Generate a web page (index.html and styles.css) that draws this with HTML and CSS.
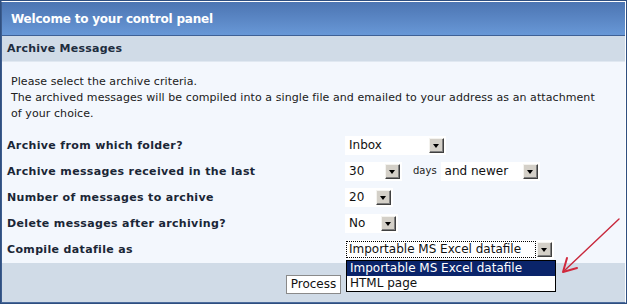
FILE: index.html
```html
<!DOCTYPE html>
<html>
<head>
	<meta charset="utf-8">
	<title>Control panel - Archive Messages</title>
	<link rel="stylesheet" href="styles.css">
</head>
<body>
	<div class="panel">
		<div class="panel-inner">
			<div class="panel-head">Welcome to your control panel</div>
			<div class="section-bar">Archive Messages</div>

			<div class="panel-body">
				<p class="intro">Please select the archive criteria.<br>The archived messages will be compiled into a single file and emailed to your address as an attachment<br>of your choice.</p>

				<div class="form-grid">
					<div class="field-label">Archive from which folder?</div>
					<div class="field">
						<span class="combo w-folder"><span class="combo-val">Inbox</span><span class="combo-btn"></span></span>
					</div>

					<div class="field-label">Archive messages received in the last</div>
					<div class="field">
						<span class="combo w-days"><span class="combo-val">30</span><span class="combo-btn"></span></span>
						<span class="unit">days</span>
						<span class="combo w-newer"><span class="combo-val">and newer</span><span class="combo-btn"></span></span>
					</div>

					<div class="field-label">Number of messages to archive</div>
					<div class="field">
						<span class="combo w-count"><span class="combo-val">20</span><span class="combo-btn"></span></span>
					</div>

					<div class="field-label">Delete messages after archiving?</div>
					<div class="field">
						<span class="combo w-yesno"><span class="combo-val">No</span><span class="combo-btn"></span></span>
					</div>

					<div class="field-label">Compile datafile as</div>
					<div class="field">
						<span class="combo w-format is-open">
							<span class="combo-val focus">Importable MS Excel datafile</span><span class="combo-btn"></span>
							<span class="combo-list">
								<span class="combo-opt selected">Importable MS Excel datafile</span>
								<span class="combo-opt">HTML page</span>
							</span>
						</span>
					</div>
				</div>
			</div>

			<div class="panel-foot">
				<button type="button" class="btn-process">Process</button>
			</div>
		</div>

		<!-- hand drawn pointer to the open list -->
		<svg class="note-arrow" width="70" height="62" viewBox="0 0 70 62">
			<path d="M64 2 L9 54" stroke="#c8283c" stroke-width="1.4" fill="none" stroke-linecap="round"/>
			<path d="M12 41 L8 55 L22 51" stroke="#d0283c" stroke-width="2" fill="none" stroke-linecap="round" stroke-linejoin="round"/>
		</svg>
	</div>
</body>
</html>
```

FILE: styles.css
```css
body {
	margin: 0;
	background: #fff;
	font-family: "DejaVu Sans", Verdana, sans-serif;
}

.panel {
	position: relative;
	width: 627px;
	box-sizing: border-box;
	border: 1px solid #2f4f80;
}

.panel-inner {
	border-style: solid;
	border-width: 1px;
	border-color: #fff #fff #4b6b9c #3d5d8e;
}

.panel-head {
	height: 33px;
	padding-left: 9px;
	line-height: 34px;
	font-size: 12px;
	letter-spacing: -0.2px;
	font-weight: bold;
	color: #fff;
	background: linear-gradient(to bottom, #4c75b2 0%, #5a86c4 50%, #6898d7 100%);
	border-bottom: 1px solid #3f6196;
}

.section-bar {
	height: 25px;
	padding-left: 5px;
	line-height: 26px;
	font-size: 11px;
	letter-spacing: 0.25px;
	font-weight: bold;
	color: #1e2c3e;
	background: #d0dbe7;
	border-bottom: 1px solid #e0e8f1;
}

.panel-body {
	background: #f3f7fd;
	padding: 12px 0 1px 5px;
}

.intro {
	margin: 0;
	padding-left: 4px;
	font-size: 11px;
	letter-spacing: 0.08px;
	line-height: 16px;
	color: #202020;
	white-space: nowrap;
}

.form-grid {
	display: grid;
	grid-template-columns: 338px auto;
	grid-auto-rows: 26px;
	align-items: center;
	margin-top: 10px;
}

.field-label {
	font-size: 11px;
	letter-spacing: 0.35px;
	font-weight: bold;
	color: #1a2636;
}

.field {
	display: flex;
	align-items: center;
}

.unit {
	font-size: 10px;
	color: #222;
	margin: 0 4px 0 11px;
	position: relative;
	top: -1px;
}

/* windows style combo box */
.combo {
	position: relative;
	display: inline-flex;
	align-items: center;
	height: 19px;
	background: #fff;
	box-sizing: border-box;
	font-size: 12px;
	color: #111;
}

.combo-val {
	flex: 1;
	padding-left: 4px;
	line-height: 15px;
	white-space: nowrap;
}

.combo-val.focus {
	margin-left: 2px;
	padding-left: 2px;
	outline: 1px dotted #000;
	margin-right: 2px;
}

.combo-btn {
	position: relative;
	width: 15px;
	height: 15px;
	margin-right: 2px;
	box-sizing: border-box;
	background: #d4d0c8;
	border: 1px solid;
	border-color: #f4f3ef #404040 #404040 #f4f3ef;
	box-shadow: inset -1px -1px #808080;
}

.combo-btn::after {
	content: "";
	position: absolute;
	left: 3px;
	top: 5px;
	border-left: 3.5px solid transparent;
	border-right: 3.5px solid transparent;
	border-top: 4px solid #000;
}

.w-folder { width: 101px; }
.w-days { width: 57px; }
.w-newer { width: 99px; }
.w-count { width: 48px; }
.w-yesno { width: 53px; }
.w-format { width: 209px; }

.combo-list {
	position: absolute;
	left: 1px;
	top: 20px;
	width: 210px;
	box-sizing: border-box;
	border: 1px solid #000;
	background: #fff;
	z-index: 2;
}

.combo-opt {
	display: block;
	height: 15px;
	line-height: 15px;
	padding-left: 3px;
	white-space: nowrap;
}

.combo-opt.selected {
	background: #0a246a;
	color: #fff;
}

.panel-foot {
	height: 39px;
	display: flex;
	align-items: center;
	justify-content: center;
	background: #d0dbe7;
}

.btn-process {
	height: 19px;
	width: 55px;
	padding: 0;
	margin-top: 3px;
	font-family: "DejaVu Sans", Verdana, sans-serif;
	font-size: 12px;
	color: #111;
	background: #fff;
	border: 1px solid #8a8a8a;
}

.note-arrow {
	position: absolute;
	left: 554px;
	top: 216px;
}
```
